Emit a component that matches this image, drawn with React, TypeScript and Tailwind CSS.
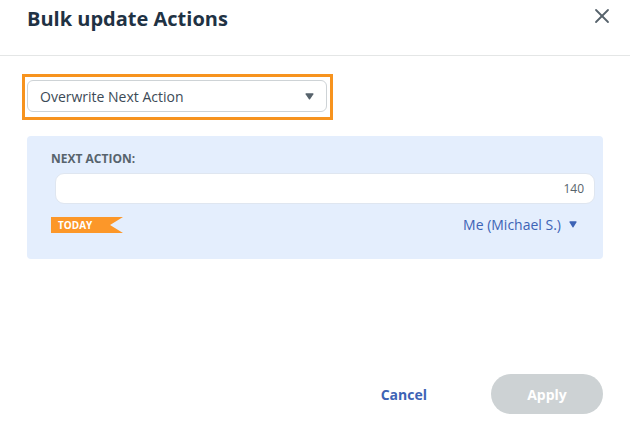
import { X } from "lucide-react";

function Caret({ className }: { className: string }) {
  return (
    <svg viewBox="0 0 10 8" className={className} fill="currentColor" preserveAspectRatio="none">
      <path d="M0.5 1 Q0.5 0.4 1.2 0.4 L8.8 0.4 Q9.5 0.4 9.5 1 Q9.5 1.4 9 2 L5.6 7 Q5 7.7 4.4 7 L1 2 Q0.5 1.4 0.5 1 Z" />
    </svg>
  );
}

export default function App() {
  return (
    <div className="w-[630px] h-[426px] bg-white overflow-hidden font-['Open_Sans',sans-serif]">
      <div className="h-[56px] border-b border-[#e4e6e6] flex justify-between pl-[27px] pr-[16px]">
        <h1 className="text-[20px] leading-[26px] mt-[6px] font-bold text-[#1f3244]">Bulk update Actions</h1>
        <button className="h-[24px] mt-[4px] text-[#57636c]">
          <X size={24} strokeWidth={1.8} />
        </button>
      </div>

      <div className="mt-[18px] ml-[22px] w-[311px] h-[46px] border-[3px] border-[#f7931e] pl-[2px] pr-[3px] pt-[3px]">
        <div className="h-[32px] bg-white border border-[#ced3d6] rounded-[6px] flex items-center justify-between pl-[12px] pr-[12px]">
          <span className="text-[14px] text-[#3c4a56]">Overwrite Next Action</span>
          <Caret className="w-[9px] h-[7px] text-[#57636c]" />
        </div>
      </div>

      <div className="mt-[16px] ml-[27px] w-[576px] h-[123px] bg-[#e4eefd] rounded-[4px] pt-[15px] pl-[24px] pr-[8px]">
        <div className="text-[12px] leading-[16px] font-bold text-[#57636c]">NEXT ACTION:</div>
        <div className="mt-[6px] ml-[4px] h-[31px] bg-white border border-[#dfe6f0] rounded-[9px] flex items-center justify-end pr-[10px] text-[12px] text-[#57636c]">
          140
        </div>
        <div className="mt-[13px] h-[16px] flex items-center justify-between pr-[18px]">
          <div className="w-[72px] h-[16px] bg-[#fc9729] flex items-center pl-[7px] text-[10px] font-bold text-white [clip-path:polygon(0_0,100%_0,82%_50%,100%_100%,0_100%)]">
            TODAY
          </div>
          <div className="flex items-center gap-[8px] mb-[2px] text-[14px] text-[#3d63b5]">
            <span>Me (Michael S.)</span>
            <Caret className="w-[8px] h-[7px]" />
          </div>
        </div>
      </div>

      <div className="mt-[115px] flex items-center justify-end pr-[27px]">
        <button className="text-[14px] font-bold text-[#3d63b5] mr-[64px]">Cancel</button>
        <button className="w-[112px] h-[40px] rounded-[20px] bg-[#cdd2d4] text-[14px] font-bold text-white">Apply</button>
      </div>
    </div>
  );
}
